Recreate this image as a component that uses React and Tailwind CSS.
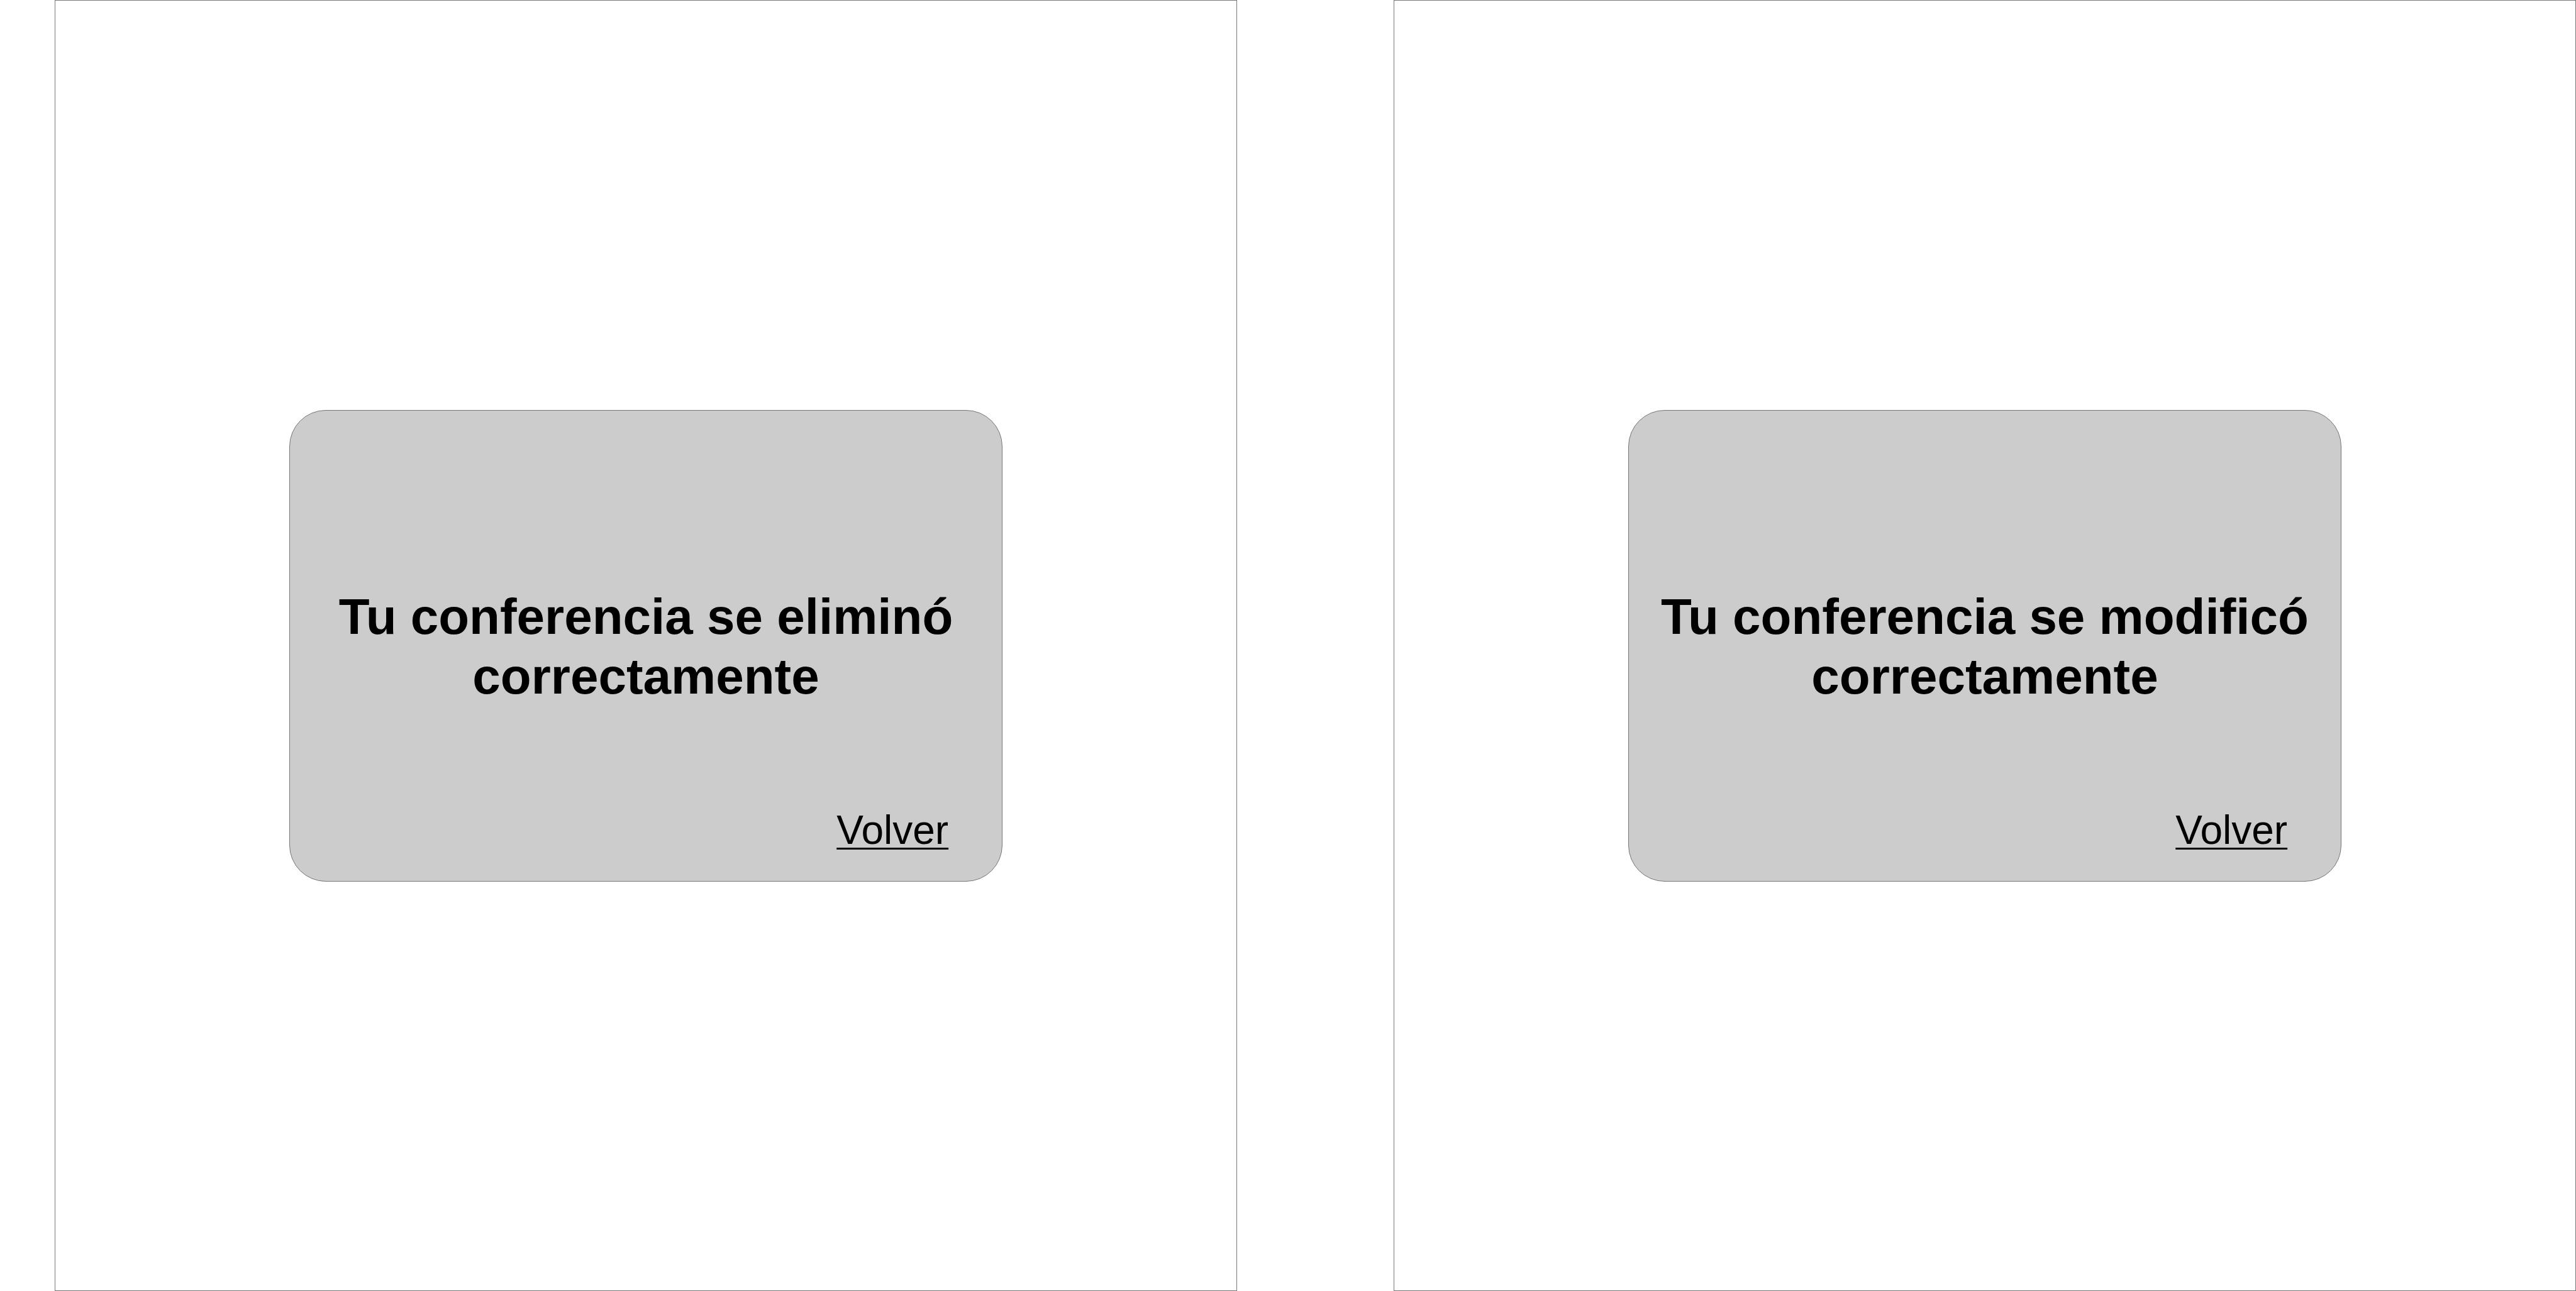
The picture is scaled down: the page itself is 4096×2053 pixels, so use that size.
const messages = [
  { id: "eliminar", title: "Tu conferencia se eliminó correctamente" },
  { id: "modificar", title: "Tu conferencia se modificó correctamente" },
];

function Confirmation({ id, title }) {
  return (
    <section
      aria-labelledby={id}
      className="flex min-h-screen flex-1 items-center justify-center border border-[#777777] bg-white"
    >
      <div className="flex w-[60.4%] flex-col rounded-[58px] border border-[#777777] bg-[#cccccc] pt-[280px] pb-[45px]">
        <h1 id={id} className="px-8 text-center text-[80px] leading-[95px] font-bold">
          {title}
        </h1>
        <a
          href="#"
          className="mt-[161px] mr-[85px] self-end text-[64px] leading-[72px] underline decoration-[3px] underline-offset-[6px] [text-decoration-skip-ink:none]"
        >
          Volver
        </a>
      </div>
    </section>
  );
}

export default function App() {
  return (
    <main className="flex min-h-screen gap-[249px] bg-white pl-[87px] font-['Liberation_Sans',Arial,sans-serif] text-black">
      {messages.map((message) => (
        <Confirmation key={message.id} {...message} />
      ))}
    </main>
  );
}
